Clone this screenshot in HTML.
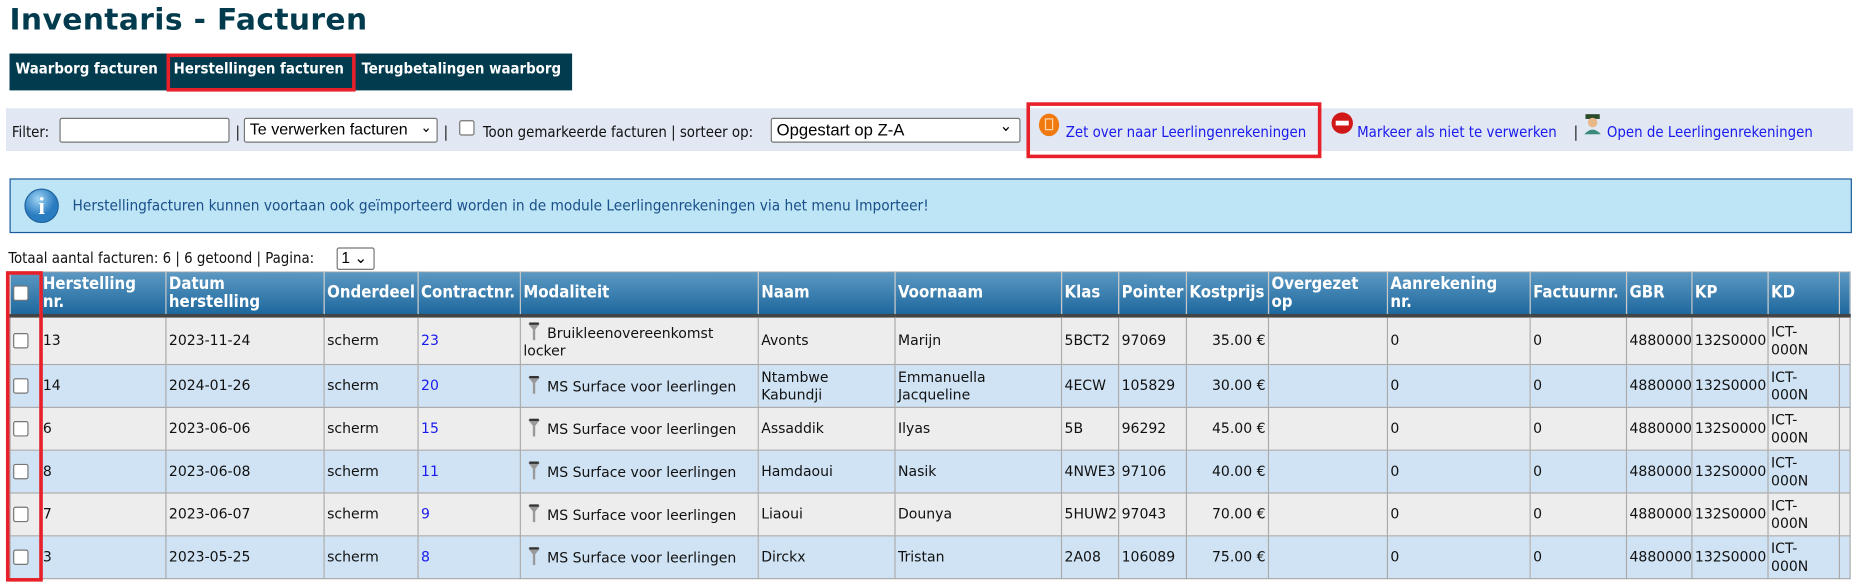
<!DOCTYPE html>
<html><head><meta charset="utf-8"><style>
*{box-sizing:border-box;margin:0;padding:0}
html,body{width:1865px;height:588px;overflow:hidden;background:#fff}
#w{position:absolute;left:0;top:0;width:1568px;height:494px;transform:scale(1.1894);transform-origin:0 0;font-family:"DejaVu Sans",Verdana,sans-serif;font-size:12px;color:#111}
.abs{position:absolute}
h1{position:absolute;left:8px;top:2px;font-size:25px;font-weight:bold;color:#023b4e;font-family:"DejaVu Sans",Verdana,sans-serif;letter-spacing:0.3px}
.tabs{left:8px;top:45px;width:473px;height:31px;background:#023b4e}
.tab{position:absolute;top:5px;color:#fff;font-weight:bold;font-size:12.5px;font-family:"DejaVu Sans Condensed","DejaVu Sans",sans-serif;white-space:nowrap}
.red{position:absolute;border:3px solid #e8202a}
.fbar{left:5px;top:91px;width:1553px;height:36px;background:#e1e8f3}
.fbar span,.fbar a{position:absolute;top:12px;font-size:12.5px;font-family:"DejaVu Sans Condensed","DejaVu Sans",sans-serif;white-space:nowrap}
a{color:#1a1aee;text-decoration:none}
.inp{position:absolute;border:1px solid #767676;background:#fff;border-radius:2px;font-size:14px;font-family:"Liberation Sans",sans-serif;color:#000;padding:1px 4px;white-space:nowrap;overflow:hidden}
.info{left:8px;top:150px;width:1549px;height:46px;background:#bde5f5;border:1px solid #1a5a9a}
table{position:absolute;left:8px;top:228px;border-collapse:collapse;table-layout:fixed;width:1547px;font-family:"DejaVu Sans",Verdana,sans-serif;font-size:11.8px}
th{background:linear-gradient(#5b98c2,#1d679d);color:#fff;text-align:left;vertical-align:middle;font-weight:bold;border:1px solid #c8c8c8;border-bottom:3px solid #444;height:37px;padding:0 2px;line-height:15px;font-size:14px;font-family:"DejaVu Sans Condensed","DejaVu Sans",sans-serif}
td{border:1px solid #aaa;padding:0 2px;vertical-align:middle;height:36px;line-height:15px;white-space:normal;overflow:hidden}
tr.g td{background:#ededed}
tr.b td{background:#d0e3f4}
.cb{display:inline-block;width:13px;height:13px;border:1px solid #767676;border-radius:2px;background:#fff;vertical-align:middle}
.r{text-align:right}
.fn{display:inline-block;width:10px;height:16px;vertical-align:-3px;margin:0 6px 0 4px}
</style></head><body><div id="w">
<h1>Inventaris - Facturen</h1>
<div class="abs tabs">
<span class="tab" style="left:5px">Waarborg facturen</span>
<span class="tab" style="left:138px">Herstellingen facturen</span>
<span class="tab" style="left:296px">Terugbetalingen waarborg</span>
</div>
<div class="red" style="left:140px;top:45px;width:159px;height:32px"></div>

<div class="abs fbar">
<span style="left:5px">Filter:</span>
<div class="inp" style="left:45px;top:8px;width:143px;height:21px"></div>
<span style="left:193px">|</span>
<div class="inp" style="left:200px;top:8px;width:163px;height:21px;font-size:13.5px">Te verwerken facturen<span style="position:absolute;right:4px;top:-1px">⌄</span></div>
<span style="left:368px">|</span>
<div class="cb" style="position:absolute;left:381px;top:10px"></div>
<span style="left:401px">Toon gemarkeerde facturen | sorteer op:</span>
<div class="inp" style="left:643px;top:8px;width:210px;height:21px">Opgestart op Z-A<span style="position:absolute;right:6px;top:-2px;font-size:14px">⌄</span></div>
<svg style="position:absolute;left:868px;top:4px" width="18" height="20"><ellipse cx="9" cy="10" rx="8.5" ry="9.5" fill="#f07a10"/><rect x="6" y="5" width="6" height="9" fill="none" stroke="#ffd9b0" stroke-width="1"/></svg>
<a style="left:891px">Zet over naar Leerlingenrekeningen</a>
<svg style="position:absolute;left:1114px;top:3px" width="19" height="19"><circle cx="9.5" cy="9.5" r="9" fill="#d01818"/><rect x="4" y="7.5" width="11" height="4" fill="#fff"/></svg>
<a style="left:1136px">Markeer als niet te verwerken</a>
<span style="left:1318px">|</span>
<svg style="position:absolute;left:1325px;top:4px" width="18" height="18"><rect x="3" y="1" width="12" height="4" fill="#2a4a2a"/><circle cx="9" cy="8" r="4" fill="#e8b888"/><path d="M2 18 Q9 10 16 18Z" fill="#3a8a7a"/></svg>
<a style="left:1346px">Open de Leerlingenrekeningen</a>
</div>
<div class="red" style="left:863px;top:86px;width:248px;height:47px"></div>

<div class="abs info">
<svg style="position:absolute;left:11px;top:7px" width="30" height="30"><defs><radialGradient id="ig" cx="40%" cy="30%"><stop offset="0" stop-color="#9fd4f4"/><stop offset="1" stop-color="#2a7cc0"/></radialGradient></defs><circle cx="15" cy="15" r="14" fill="url(#ig)" stroke="#1f63a0"/><text x="15" y="22" font-family="Liberation Serif,serif" font-weight="bold" font-size="20" fill="#fff" text-anchor="middle">i</text></svg>
<span style="position:absolute;left:52px;top:15px;color:#1a4f8a;font-size:12.85px;white-space:nowrap;font-family:'DejaVu Sans Condensed','DejaVu Sans',sans-serif">Herstellingfacturen kunnen voortaan ook geïmporteerd worden in de module Leerlingenrekeningen via het menu Importeer!</span>
</div>

<div class="abs" style="left:7px;top:209px;font-size:12.5px;white-space:nowrap;font-family:'DejaVu Sans Condensed','DejaVu Sans',sans-serif">Totaal aantal facturen: 6 | 6 getoond | Pagina:</div>
<div class="inp" style="left:283px;top:208px;width:32px;height:19px;font-size:13px;padding:0 3px">1 ⌄</div>

<table>
<colgroup><col style="width:25px"><col style="width:106px"><col style="width:133px"><col style="width:79px"><col style="width:86px"><col style="width:200px"><col style="width:115px"><col style="width:140px"><col style="width:48px"><col style="width:57px"><col style="width:69px"><col style="width:100px"><col style="width:120px"><col style="width:81px"><col style="width:55px"><col style="width:64px"><col style="width:60px"><col style="width:9px"></colgroup>
<tr><th><span class="cb"></span></th><th>Herstelling<br>nr.</th><th>Datum<br>herstelling</th><th>Onderdeel</th><th>Contractnr.</th><th>Modaliteit</th><th>Naam</th><th>Voornaam</th><th>Klas</th><th>Pointer</th><th>Kostprijs</th><th>Overgezet<br>op</th><th>Aanrekening<br>nr.</th><th>Factuurnr.</th><th>GBR</th><th>KP</th><th>KD</th><th></th></tr>
<tr class="g" style="height:41px"><td><span class="cb"></span></td><td>13</td><td>2023-11-24</td><td>scherm</td><td><a>23</a></td><td><svg class="fn" viewBox="0 0 10 16"><path d="M0 1h10L6 6v9H4V6z" fill="#999"/><path d="M1 1h8" stroke="#333" stroke-width="2"/></svg>Bruikleenovereenkomst locker</td><td>Avonts</td><td>Marijn</td><td>5BCT2</td><td>97069</td><td class="r">35.00 €</td><td></td><td>0</td><td>0</td><td>4880000</td><td>132S0000</td><td>ICT-<br>000N</td><td></td></tr>
<tr class="b"><td><span class="cb"></span></td><td>14</td><td>2024-01-26</td><td>scherm</td><td><a>20</a></td><td><svg class="fn" viewBox="0 0 10 16"><path d="M0 1h10L6 6v9H4V6z" fill="#999"/><path d="M1 1h8" stroke="#333" stroke-width="2"/></svg>MS Surface voor leerlingen</td><td>Ntambwe Kabundji</td><td>Emmanuella Jacqueline</td><td>4ECW</td><td>105829</td><td class="r">30.00 €</td><td></td><td>0</td><td>0</td><td>4880000</td><td>132S0000</td><td>ICT-<br>000N</td><td></td></tr>
<tr class="g"><td><span class="cb"></span></td><td>6</td><td>2023-06-06</td><td>scherm</td><td><a>15</a></td><td><svg class="fn" viewBox="0 0 10 16"><path d="M0 1h10L6 6v9H4V6z" fill="#999"/><path d="M1 1h8" stroke="#333" stroke-width="2"/></svg>MS Surface voor leerlingen</td><td>Assaddik</td><td>Ilyas</td><td>5B</td><td>96292</td><td class="r">45.00 €</td><td></td><td>0</td><td>0</td><td>4880000</td><td>132S0000</td><td>ICT-<br>000N</td><td></td></tr>
<tr class="b"><td><span class="cb"></span></td><td>8</td><td>2023-06-08</td><td>scherm</td><td><a>11</a></td><td><svg class="fn" viewBox="0 0 10 16"><path d="M0 1h10L6 6v9H4V6z" fill="#999"/><path d="M1 1h8" stroke="#333" stroke-width="2"/></svg>MS Surface voor leerlingen</td><td>Hamdaoui</td><td>Nasik</td><td>4NWE3</td><td>97106</td><td class="r">40.00 €</td><td></td><td>0</td><td>0</td><td>4880000</td><td>132S0000</td><td>ICT-<br>000N</td><td></td></tr>
<tr class="g"><td><span class="cb"></span></td><td>7</td><td>2023-06-07</td><td>scherm</td><td><a>9</a></td><td><svg class="fn" viewBox="0 0 10 16"><path d="M0 1h10L6 6v9H4V6z" fill="#999"/><path d="M1 1h8" stroke="#333" stroke-width="2"/></svg>MS Surface voor leerlingen</td><td>Liaoui</td><td>Dounya</td><td>5HUW2</td><td>97043</td><td class="r">70.00 €</td><td></td><td>0</td><td>0</td><td>4880000</td><td>132S0000</td><td>ICT-<br>000N</td><td></td></tr>
<tr class="b"><td><span class="cb"></span></td><td>3</td><td>2023-05-25</td><td>scherm</td><td><a>8</a></td><td><svg class="fn" viewBox="0 0 10 16"><path d="M0 1h10L6 6v9H4V6z" fill="#999"/><path d="M1 1h8" stroke="#333" stroke-width="2"/></svg>MS Surface voor leerlingen</td><td>Dirckx</td><td>Tristan</td><td>2A08</td><td>106089</td><td class="r">75.00 €</td><td></td><td>0</td><td>0</td><td>4880000</td><td>132S0000</td><td>ICT-<br>000N</td><td></td></tr>
</table>
<div class="red" style="left:5px;top:228px;width:31px;height:261px"></div>
</div></body></html>
